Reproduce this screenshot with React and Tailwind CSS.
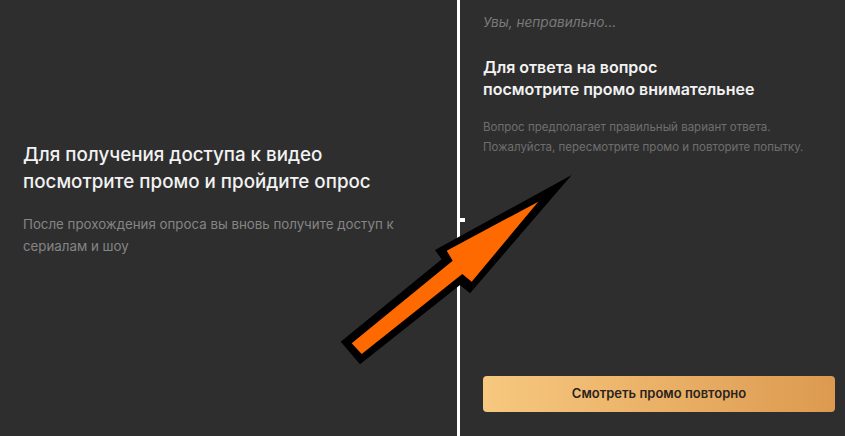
import React from 'react';

const font = { fontFamily: 'Inter, "Noto Sans", sans-serif' };

const Arrow = () => (
  <svg className="absolute left-0 top-0 pointer-events-none" width="845" height="436" viewBox="0 0 845 436">
    {/* outer black outline */}
    <polygon
      points="571.7,175 435,250 441.7,259.3 340.7,341.7 360,364.3 460,285 470,293.3"
      fill="#000"
    />
    {/* orange body */}
    <polygon
      points="538.3,201.7 446.7,250.7 452.7,260.7 351.7,343.3 361.7,354 462.3,274 471.7,281.7"
      fill="#ff6a00"
    />
  </svg>
);

export default function App() {
  return (
    <div className="relative flex h-[436px] w-[845px] overflow-hidden bg-[#2e2e2e]" style={font}>
      {/* left panel */}
      <div className="w-[457px] shrink-0 pl-[23px] pt-[141px]">
        <h2 className="text-[18.8px] leading-[27px] font-medium text-[#f2f2f2]">
          Для получения доступа к видео
          <br />
          посмотрите промо и пройдите опрос
        </h2>
        <p className="mt-[18px] text-[13.3px] leading-[22px] text-[#858585]">
          После прохождения опроса вы вновь получите доступ к
          <br />
          сериалам и шоу
        </p>
      </div>

      {/* divider */}
      <div className="relative w-[3px] shrink-0 bg-white">
        <div className="absolute left-[3px] top-[218px] h-[4px] w-[5px] bg-white"></div>
      </div>

      {/* right panel */}
      <div className="flex flex-1 flex-col pl-[23px] pr-[10px] pt-[12px] pb-[24px]">
        <p className="text-[13.6px] leading-[20px] italic text-[#7a7a7a]">Увы, неправильно...</p>
        <h2 className="mt-[24px] text-[16px] leading-[22px] font-semibold text-[#f2f2f2]">
          Для ответа на вопрос
          <br />
          посмотрите промо внимательнее
        </h2>
        <p className="mt-[17px] text-[11.5px] leading-[20px] text-[#6e6e6e]">
          Вопрос предполагает правильный вариант ответа.
          <br />
          Пожалуйста, пересмотрите промо и повторите попытку.
        </p>
        <div className="mt-auto">
          <button className="flex h-[36px] w-full items-center justify-center rounded-[4px] bg-gradient-to-r from-[#f7c87f] to-[#dc9a4f] text-[13px] font-semibold text-[#2a2320]">
            Смотреть промо повторно
          </button>
        </div>
      </div>

      <Arrow />
    </div>
  );
}
